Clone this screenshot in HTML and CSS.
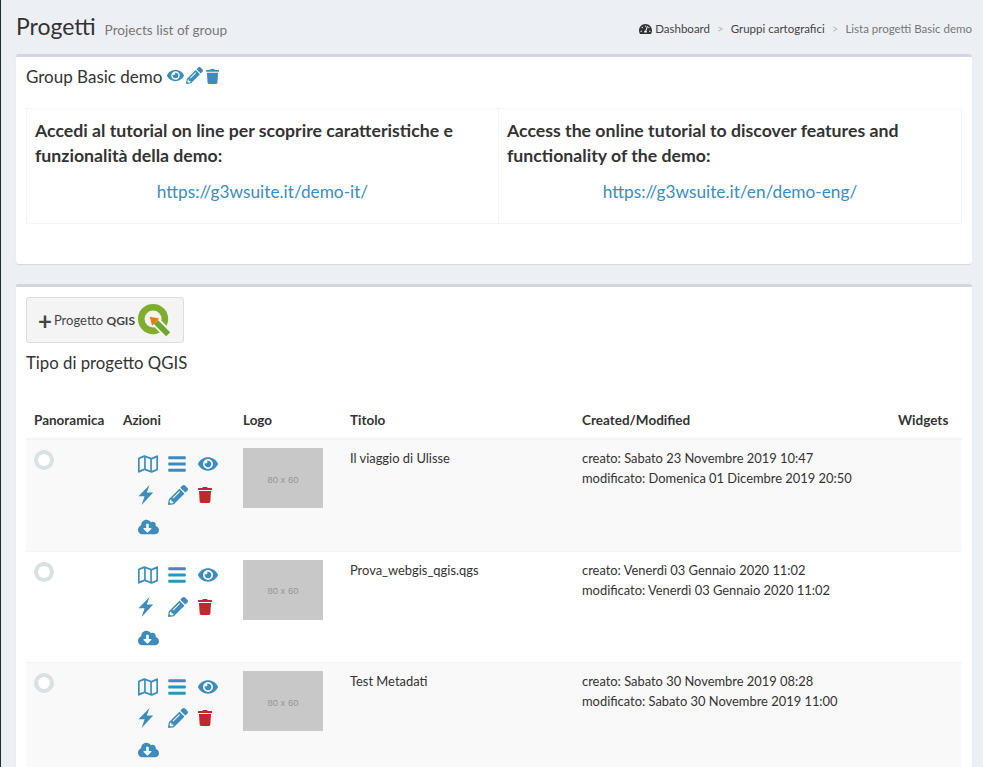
FILE: index.html
```html
<!DOCTYPE html>
<html lang="en">
<head>
    <meta charset="UTF-8">
    <meta name="viewport" content="width=device-width, initial-scale=1.0">
    <title>Progetti</title>
    <link rel="stylesheet" href="styles.css">
</head>
<body>
    <svg class="defs">
        <symbol id="i-eye" viewBox="0 0 576 512"><path d="M572.52 241.4C518.29 135.59 410.93 64 288 64S57.68 135.64 3.48 241.41a32.35 32.35 0 0 0 0 29.19C57.71 376.41 165.07 448 288 448s230.32-71.64 284.52-177.41a32.35 32.35 0 0 0 0-29.19zM288 400a144 144 0 1 1 144-144 143.93 143.93 0 0 1-144 144zm0-240a95.31 95.31 0 0 0-25.31 3.79 47.85 47.85 0 0 1-66.9 66.9A95.78 95.78 0 1 0 288 160z"/></symbol>
        <symbol id="i-pencil" viewBox="0 0 512 512"><path d="M497.9 142.1l-46.1 46.1c-4.7 4.7-12.3 4.7-17 0l-111-111c-4.7-4.7-4.7-12.3 0-17l46.1-46.1c18.7-18.7 49.1-18.7 67.9 0l60.1 60.1c18.8 18.7 18.8 49.1 0 67.9zM284.2 99.8L21.6 362.4.4 483.9c-2.9 16.4 11.4 30.6 27.8 27.8l121.5-21.3 262.6-262.6c4.7-4.7 4.7-12.3 0-17l-111-111c-4.8-4.7-12.4-4.7-17.1 0zM124.1 339.9c-5.5-5.5-5.5-14.3 0-19.8l154-154c5.5-5.5 14.3-5.5 19.8 0s5.5 14.3 0 19.8l-154 154c-5.5 5.5-14.3 5.5-19.8 0zM88 424h48v36.3l-64.5 11.3-31.1-31.1L51.7 376H88v48z"/></symbol>
        <symbol id="i-trash" viewBox="0 0 448 512"><path d="M432 32H312l-9.4-18.7A24 24 0 0 0 281.1 0H166.8a23.72 23.72 0 0 0-21.4 13.3L136 32H16A16 16 0 0 0 0 48v32a16 16 0 0 0 16 16h416a16 16 0 0 0 16-16V48a16 16 0 0 0-16-16zM53.2 467a48 48 0 0 0 47.9 45h245.8a48 48 0 0 0 47.9-45L416 128H32z"/></symbol>
        <symbol id="i-bars" viewBox="0 0 448 512"><path d="M16 132h416c8.837 0 16-7.163 16-16V76c0-8.837-7.163-16-16-16H16C7.163 60 0 67.163 0 76v40c0 8.837 7.163 16 16 16zm0 160h416c8.837 0 16-7.163 16-16v-40c0-8.837-7.163-16-16-16H16c-8.837 0-16 7.163-16 16v40c0 8.837 7.163 16 16 16zm0 160h416c8.837 0 16-7.163 16-16v-40c0-8.837-7.163-16-16-16H16c-8.837 0-16 7.163-16 16v40c0 8.837 7.163 16 16 16z"/></symbol>
        <symbol id="i-bolt" viewBox="0 0 16 20"><path d="M11.5 0 L.5 11.2 H6.6 L3.6 20 L15.2 7.6 H8.8 Z"/></symbol>
        <symbol id="i-cloud" viewBox="0 0 640 512"><path d="M537.6 226.6c4.1-10.7 6.4-22.4 6.4-34.6 0-53-43-96-96-96-19.7 0-38.1 6-53.3 16.2C367 64.2 315.3 32 256 32c-88.4 0-160 71.6-160 160 0 2.7.1 5.4.2 8.1C40.2 219.8 0 273.2 0 336c0 79.5 64.5 144 144 144h368c70.7 0 128-57.3 128-128 0-61.9-44-113.6-102.4-125.4zm-132.9 88.7L299.3 420.7c-6.2 6.2-16.4 6.2-22.6 0L171.3 315.3c-10.1-10.1-2.9-27.3 11.3-27.3H248V176c0-8.8 7.2-16 16-16h48c8.8 0 16 7.2 16 16v112h65.4c14.2 0 21.4 17.2 11.3 27.3z"/></symbol>
        <symbol id="i-map" viewBox="0 0 576 512" preserveAspectRatio="none"><path d="M560.02 32c-1.96 0-3.98.37-5.96 1.16L384.01 96H384L212 35.28A64.252 64.252 0 0 0 191.76 32c-6.69 0-13.37 1.05-19.81 3.14L20.12 87.95A32.006 32.006 0 0 0 0 117.66v346.32C0 473.17 7.53 480 15.99 480c1.96 0 3.97-.37 5.96-1.16L192 416l172 60.71a63.98 63.98 0 0 0 40.05.15l151.83-52.81A31.996 31.996 0 0 0 576 394.34V48.02c0-9.19-7.53-16.02-15.98-16.02zM224 90.42l128 45.19v285.97l-128-45.19V90.42zM48 418.05V129.07l128-44.53v286.2l-.64.23L48 418.05zm480-35.13l-128 44.53V141.26l.64-.24L528 93.95v288.97z"/></symbol>
        <symbol id="i-gauge" viewBox="0 0 576 512"><path d="M288 32C128.94 32 0 160.94 0 320c0 52.8 14.25 102.26 39.06 144.8 5.61 9.62 16.3 15.2 27.44 15.2h443c11.14 0 21.83-5.58 27.44-15.2C561.75 422.26 576 372.8 576 320c0-159.06-128.94-288-288-288zm0 64c14.71 0 26.58 10.13 30.32 23.65-1.11 2.26-2.64 4.23-3.45 6.67l-9.22 27.67c-5.13 3.49-10.97 6.01-17.64 6.01-17.67 0-32-14.33-32-32S270.33 96 288 96zM96 384c-17.67 0-32-14.33-32-32s14.33-32 32-32 32 14.33 32 32-14.33 32-32 32zm48-160c-17.67 0-32-14.33-32-32s14.33-32 32-32 32 14.33 32 32-14.33 32-32 32zm246.77-72.41l-61.33 184C343.13 347.33 352 364.54 352 384c0 11.72-3.38 22.55-8.88 32H232.88c-5.5-9.45-8.88-20.28-8.88-32 0-33.94 26.5-61.43 59.9-63.59l61.34-184.01c4.17-12.56 17.73-19.45 30.36-15.17 12.57 4.19 19.35 17.79 15.17 30.36zm14.66 57.2l15.52-46.55c3.47-1.29 7.13-2.23 11.05-2.23 17.67 0 32 14.33 32 32s-14.33 32-32 32c-11.38-.01-20.89-6.28-26.57-15.22zM480 384c-17.67 0-32-14.33-32-32s14.33-32 32-32 32 14.33 32 32-14.33 32-32 32z"/></symbol>
    </svg>

    <div class="content">
        <div class="page-header">
            <h1>Progetti <small>Projects list of group</small></h1>
            <ol class="breadcrumb">
                <li class="crumb-home"><svg class="icon-gauge"><use href="#i-gauge"/></svg> Dashboard</li>
                <li class="sep">&gt;</li>
                <li>Gruppi cartografici</li>
                <li class="sep">&gt;</li>
                <li class="crumb-active">Lista progetti Basic demo</li>
            </ol>
        </div>

        <div class="box box-group">
            <h3 class="box-title">Group Basic demo
                <svg class="tool tool-eye"><use href="#i-eye"/></svg>
                <svg class="tool tool-pencil"><use href="#i-pencil"/></svg>
                <svg class="tool tool-trash"><use href="#i-trash"/></svg>
            </h3>
            <table class="tutorial">
                <tr>
                    <td class="tutorial-it">
                        <strong>Accedi al tutorial on line per scoprire caratteristiche e funzionalità della demo:</strong>
                        <a href="#">https://g3wsuite.it/demo-it/</a>
                    </td>
                    <td>
                        <strong>Access the online tutorial to discover features and functionality of the demo:</strong>
                        <a href="#">https://g3wsuite.it/en/demo-eng/</a>
                    </td>
                </tr>
            </table>
        </div>

        <div class="box box-projects">
            <button class="btn-add">
                <span class="plus">+</span> <span>Progetto <b>QGIS</b></span>
                <svg class="qgis-logo" viewBox="0 0 36 36">
                    <circle cx="17" cy="17" r="12.5" fill="none" stroke="#7fae2e" stroke-width="7"/>
                    <path d="M20 20 L36 36" stroke="#f4f4f4" stroke-width="10"/>
                    <path d="M20 20 L33 33" stroke="#6ea62f" stroke-width="6"/>
                    <path d="M13.5 14.5 L23.5 16.5 L16 24 Z" fill="#ee7913"/>
                </svg>
            </button>
            <h3 class="list-title">Tipo di progetto QGIS</h3>

            <table class="projects">
                <thead>
                    <tr>
                        <th class="col-pan">Panoramica</th>
                        <th class="col-act">Azioni</th>
                        <th class="col-logo">Logo</th>
                        <th class="col-title">Titolo</th>
                        <th class="col-date">Created/Modified</th>
                        <th>Widgets</th>
                    </tr>
                </thead>
                <tbody>
                    <tr>
                        <td><span class="radio"></span></td>
                        <td>
                            <div class="actions">
                                <svg class="a-map"><use href="#i-map"/></svg>
                                <svg class="a-bars"><use href="#i-bars"/></svg>
                                <svg class="a-eye"><use href="#i-eye"/></svg>
                                <svg class="a-bolt"><use href="#i-bolt"/></svg>
                                <svg class="a-pencil"><use href="#i-pencil"/></svg>
                                <svg class="a-trash"><use href="#i-trash"/></svg>
                                <svg class="a-cloud"><use href="#i-cloud"/></svg>
                            </div>
                        </td>
                        <td><div class="thumb">80 x 60</div></td>
                        <td>Il viaggio di Ulisse</td>
                        <td>creato: Sabato 23 Novembre 2019 10:47<br>modificato: Domenica 01 Dicembre 2019 20:50</td>
                        <td></td>
                    </tr>
                    <tr>
                        <td><span class="radio"></span></td>
                        <td>
                            <div class="actions">
                                <svg class="a-map"><use href="#i-map"/></svg>
                                <svg class="a-bars"><use href="#i-bars"/></svg>
                                <svg class="a-eye"><use href="#i-eye"/></svg>
                                <svg class="a-bolt"><use href="#i-bolt"/></svg>
                                <svg class="a-pencil"><use href="#i-pencil"/></svg>
                                <svg class="a-trash"><use href="#i-trash"/></svg>
                                <svg class="a-cloud"><use href="#i-cloud"/></svg>
                            </div>
                        </td>
                        <td><div class="thumb">80 x 60</div></td>
                        <td>Prova_webgis_qgis.qgs</td>
                        <td>creato: Venerdì 03 Gennaio 2020 11:02<br>modificato: Venerdì 03 Gennaio 2020 11:02</td>
                        <td></td>
                    </tr>
                    <tr>
                        <td><span class="radio"></span></td>
                        <td>
                            <div class="actions">
                                <svg class="a-map"><use href="#i-map"/></svg>
                                <svg class="a-bars"><use href="#i-bars"/></svg>
                                <svg class="a-eye"><use href="#i-eye"/></svg>
                                <svg class="a-bolt"><use href="#i-bolt"/></svg>
                                <svg class="a-pencil"><use href="#i-pencil"/></svg>
                                <svg class="a-trash"><use href="#i-trash"/></svg>
                                <svg class="a-cloud"><use href="#i-cloud"/></svg>
                            </div>
                        </td>
                        <td><div class="thumb">80 x 60</div></td>
                        <td>Test Metadati</td>
                        <td>creato: Sabato 30 Novembre 2019 08:28<br>modificato: Sabato 30 Novembre 2019 11:00</td>
                        <td></td>
                    </tr>
                </tbody>
            </table>
        </div>
    </div>
</body>
</html>
```

FILE: styles.css
```css
body {
    font-family: Lato, "Open Sans", sans-serif;
    font-size: 12.9px;
    line-height: 20px;
    color: #333;
    background-color: #ecf0f5;
    border-left: 1px solid #222d32;
    margin: 0;
    padding: 0;
}
.defs {
    display: none;
}
.content {
    padding: 0 11px 0 15px;
}

/* header */
.page-header {
    display: flex;
    justify-content: space-between;
    align-items: center;
    height: 54px;
}
h1 {
    font-size: 23px;
    font-weight: 400;
    margin: 1px 0 0;
}
h1 small {
    font-size: 13.6px;
    color: #777;
    padding-left: 3px;
}
.breadcrumb {
    display: flex;
    gap: 7px;
    list-style: none;
    margin: 3px 0 0;
    padding: 0;
    font-size: 11.5px;
    color: #444;
}
.sep {
    color: #bbb;
}
.crumb-active {
    color: #777;
}
.icon-gauge {
    width: 13px;
    height: 12px;
    fill: #333;
    vertical-align: -2px;
}

/* boxes */
.box {
    background-color: #fff;
    border-top: 3px solid #d2d6de;
    border-radius: 3px;
    box-shadow: 0 1px 1px rgba(0, 0, 0, 0.1);
    margin-bottom: 20px;
    padding: 10px;
}
.box-group {
    height: 210px;
    box-sizing: border-box;
}
.box-title {
    font-size: 17px;
    font-weight: 400;
    line-height: 20px;
    margin: 0 0 21px;
}
.tool {
    fill: #3c8dbc;
    height: 17px;
    vertical-align: -1px;
}
.tool-eye {
    width: 17px;
}
.tool-pencil {
    width: 17px;
    margin-left: -2px;
}
.tool-trash {
    width: 13px;
    height: 15px;
    margin-left: -2px;
}

/* tutorial links */
.tutorial {
    width: 100%;
    height: 116px;
    border-collapse: collapse;
    table-layout: fixed;
}
.tutorial td {
    border: 1px solid #f4f4f4;
    padding: 9px 8px 8px;
    vertical-align: top;
    font-size: 17.7px;
    line-height: 25px;
}
.tutorial .tutorial-it {
    box-sizing: border-box;
    width: 472px;
}
.tutorial strong {
    display: block;
}
.tutorial a {
    display: block;
    text-align: center;
    font-size: 17.25px;
    color: #3c8dbc;
    text-decoration: none;
    margin-top: 11px;
}

/* add button */
.btn-add {
    display: flex;
    align-items: center;
    gap: 2px;
    width: 158px;
    height: 46px;
    padding: 0 10px 0 11px;
    background-color: #f4f4f4;
    border: 1px solid #ddd;
    border-radius: 3px;
    font-family: inherit;
    font-size: 13px;
    color: #444;
    white-space: nowrap;
}
.btn-add b {
    font-size: 12px;
}
.plus {
    font-size: 24px;
    font-weight: 700;
}
.qgis-logo {
    width: 34px;
    height: 34px;
    flex: none;
}
.list-title {
    font-size: 16.75px;
    font-weight: 400;
    line-height: 20px;
    margin: 10px 0 29px;
}

/* projects table */
.projects {
    width: 100%;
    border-collapse: collapse;
    table-layout: fixed;
}
.projects th {
    box-sizing: border-box;
    text-align: left;
    padding: 8px;
    border-bottom: 2px solid #f4f4f4;
    font-size: 13.5px;
    font-weight: 700;
}
.projects td {
    height: 111.5px;
    box-sizing: border-box;
    padding: 8px;
    vertical-align: top;
    border-top: 1px solid #f4f4f4;
}
.projects tbody tr:nth-child(odd) {
    background-color: #f9f9f9;
}
.col-pan {
    width: 89px;
}
.col-act {
    width: 120px;
}
.col-logo {
    width: 107px;
}
.col-title {
    width: 232px;
}
.col-date {
    width: 316px;
}
.radio {
    display: block;
    width: 20px;
    height: 20px;
    box-sizing: border-box;
    border: 4px solid #dbe0e3;
    border-radius: 50%;
    background-color: #fff;
    margin-top: 2px;
}
.actions {
    display: grid;
    grid-template-columns: repeat(3, 30px);
    grid-auto-rows: 31.5px;
    align-items: center;
    padding-left: 15px;
    fill: #3c8dbc;
}
.actions svg {
    height: 20px;
}
.a-map {
    width: 20px;
}
.a-bars {
    width: 18px;
}
.a-eye {
    width: 20px;
}
.a-bolt {
    width: 16px;
}
.a-pencil {
    width: 20px;
}
.actions .a-trash {
    width: 14px;
    height: 16px;
    fill: #c0282d;
}
.a-cloud {
    width: 21px;
}
.thumb {
    box-sizing: border-box;
    display: flex;
    align-items: center;
    justify-content: center;
    width: 80px;
    height: 60px;
    padding-top: 3px;
    background-color: #c8c8c8;
    color: #969696;
    font-family: "Liberation Sans", Arial, sans-serif;
    font-size: 9.5px;
}
```
